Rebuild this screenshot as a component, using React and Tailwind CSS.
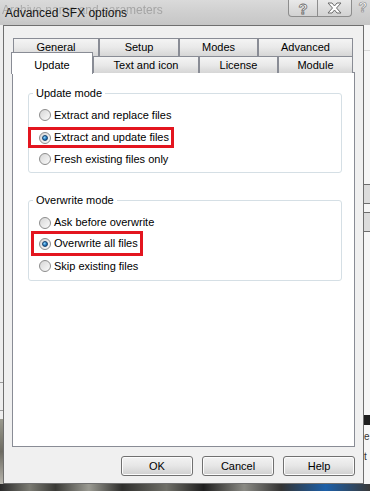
const Radio = ({ checked }) => (
  <span className="flex h-[12px] w-[12px] shrink-0 items-center justify-center rounded-full border border-[#8c8c8c] bg-linear-to-br from-[#d6d6d6] to-[#fbfbfb]">
    {checked && (
      <span className="h-[6px] w-[6px] rounded-full border border-[#16426e] bg-[radial-gradient(circle_at_35%_35%,#8fd8ff,#1f72b8_60%,#0c3c6e)]" />
    )}
  </span>
);

const Option = ({ label, checked, className = 'h-[22px] pl-[10px]' }) => (
  <div className={`flex items-center gap-[3px] ${className}`}>
    <Radio checked={checked} />
    <span>{label}</span>
  </div>
);

const Tab = ({ label, className }) => (
  <div
    className={`flex items-center justify-center border border-b-0 border-[#898c95] bg-linear-to-b from-[#f4f4f4] via-[#e9e9e9] to-[#d6d6d6] ${className}`}
  >
    {label}
  </div>
);

const Button = ({ label }) => (
  <div className="flex h-[20px] w-[72px] items-center justify-center rounded-[3px] border border-[#707070] bg-linear-to-b from-[#f3f3f3] via-[#e6e6e6] to-[#cfcfcf] shadow-[inset_0_0_0_1px_#fcfcfc]">
    {label}
  </div>
);

export default function App() {
  return (
    <div className="flex h-[491px] w-[370px] flex-col overflow-hidden bg-[#e9e9e9] font-['Liberation_Sans',Arial,sans-serif] text-[11px] text-black">
      {/* title bar */}
      <div className="relative flex h-[25px] shrink-0 bg-linear-to-b from-[#dadada] via-[#cfcfcf] to-[#c6c6c6]">
        <span className="absolute left-[2px] top-px text-[12px] text-[#a4a4a4] blur-[0.4px]">
          Archive name and parameters
        </span>
        <span className="relative pl-[5px] pt-[6px] text-[12px] leading-[14px] text-[#151515] [text-shadow:0_0_6px_#e8e8e8]">
          Advanced SFX options
        </span>
        <div className="ml-auto flex h-[17px]">
          <div className="flex w-[30px] items-center justify-center rounded-bl-[4px] border border-t-0 border-[#8d8d8d] bg-linear-to-b from-[#e9e9e9] to-[#d2d2d2] text-[15px] font-bold leading-none text-white [-webkit-text-stroke:0.8px_#6a6a6a]">
            ?
          </div>
          <div className="flex w-[34px] items-center justify-center rounded-br-[4px] border border-l-0 border-t-0 border-[#8d8d8d] bg-linear-to-b from-[#e9e9e9] to-[#d2d2d2]">
            <svg width="15" height="12" viewBox="0 0 15 12">
              <path
                d="M1 1h4l2.5 3 2.5-3h4l-4.5 5 4.5 5h-4l-2.5-3-2.5 3h-4l4.5-5z"
                fill="#fff"
                stroke="#6c6c6c"
                strokeWidth="1"
                strokeLinejoin="round"
              />
            </svg>
          </div>
          <div className="flex w-[18px] items-start justify-end pr-[3px] text-[14px] font-bold leading-[14px] text-white [-webkit-text-stroke:0.7px_#8a8a8a]">
            ?
          </div>
        </div>
      </div>

      <div className="flex h-[459px] shrink-0">
        {/* window behind, left edge */}
        <div className="flex w-[3px] flex-col bg-[#eeeeee]">
          <div className="mt-[357px] h-px bg-[#9a9a9a]" />
          <div className="mt-[27px] h-px bg-[#9a9a9a]" />
          <div className="mt-[8px] flex-1 bg-linear-to-b from-[#9a9a8e] via-[#6d6b62] to-[#b8b6ae]" />
        </div>

        {/* dialog */}
        <div className="flex w-[361px] flex-col border border-[#6f6f6f] bg-[#f0f0f0] pl-[8px] pr-[7px] pt-[12px]">
          <div className="w-[343px]">
            <div className="ml-px flex h-[18px]">
              <Tab label="General" className="w-[86px]" />
              <Tab label="Setup" className="w-[80px]" />
              <Tab label="Modes" className="w-[79px]" />
              <Tab label="Advanced" className="w-[95px]" />
            </div>
            <div className="-ml-px flex h-[17px] items-end">
              <div className="relative z-10 -mb-px flex h-[22px] w-[82px] items-start justify-center border border-b-0 border-[#898c95] bg-white pt-[4px]">
                Update
              </div>
              <Tab label="Text and icon" className="h-[17px] w-[106px]" />
              <Tab label="License" className="h-[17px] w-[79px]" />
              <Tab label="Module" className="h-[17px] w-[75px]" />
            </div>
            <div className="-mt-px h-[375px] border border-[#898c95] bg-white pl-[15px] pt-[13px]">
              <fieldset className="w-[314px] rounded-[3px] border border-[#d5dfe5] pb-[2px] pt-[4px]">
                <legend className="ml-[4px] px-[3px] leading-[14px]">Update mode</legend>
                <Option label="Extract and replace files" />
                <Option
                  label="Extract and update files"
                  checked
                  className="-ml-px mt-px h-[21px] w-[146px] border-[3px] border-[#e3151f] pl-[8px]"
                />
                <Option label="Fresh existing files only" />
              </fieldset>
              <fieldset className="mt-[20px] w-[314px] rounded-[3px] border border-[#d5dfe5] pb-[4px] pt-[7px]">
                <legend className="ml-[4px] px-[3px] leading-[14px]">Overwrite mode</legend>
                <Option label="Ask before overwrite" className="h-[17px] pl-[10px]" />
                <Option
                  label="Overwrite all files"
                  checked
                  className="ml-[2px] h-[25px] w-[112px] border-[3px] border-[#e3151f] pl-[5px]"
                />
                <Option label="Skip existing files" className="h-[20px] pl-[10px]" />
              </fieldset>
            </div>
          </div>
          <div className="mt-[9px] flex w-[343px] justify-end gap-[9px]">
            <Button label="OK" />
            <Button label="Cancel" />
            <Button label="Help" />
          </div>
        </div>

        {/* window behind, right edge */}
        <div className="flex flex-1 flex-col bg-[#f6f6f6]">
          <div className="mt-[25px] h-px bg-[#d8d8d8]" />
          <div className="mt-[133px] h-[20px] border-y border-[#6d6d6d] bg-[#dcdcdc]" />
          <div className="mt-[8px] h-[20px] border-y border-[#6d6d6d] bg-[#dcdcdc]" />
          <div className="mt-[183px] h-[10px] bg-[#1d1d1d]" />
          <div className="mt-[6px] text-[10px] leading-[12px] text-[#333]">e</div>
          <div className="mt-[8px] text-[10px] leading-[12px] text-[#333]">t</div>
        </div>
      </div>

      {/* desktop behind */}
      <div className="h-[7px] shrink-0 bg-[linear-gradient(90deg,#2a2a2a,#7a7a72_8%,#3a3a36_15%,#9a9a92_24%,#2e2e2c_33%,#6f6f68_45%,#1e1e1e_55%,#8a8a84_66%,#333_76%,#1c5fa8_88%,#3a3a3a)]" />
    </div>
  );
}
